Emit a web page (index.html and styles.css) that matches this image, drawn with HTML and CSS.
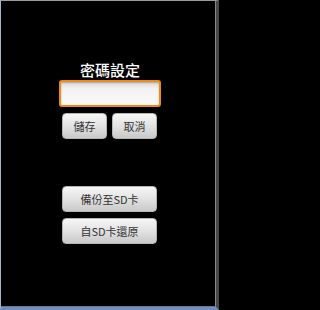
FILE: index.html
```html
<!DOCTYPE html>
<html>
<head>
<meta charset="utf-8">
<link rel="stylesheet" href="styles.css">
</head>
<body>
<div class="frame">
  <div class="screen">
    <div class="panel">
      <div class="title">密碼設定</div>
      <div class="input"></div>
      <div class="row">
        <div class="btn small">儲存</div>
        <div class="btn small">取消</div>
      </div>
      <div class="btn wide first">備份至SD卡</div>
      <div class="btn wide">自SD卡還原</div>
    </div>
  </div>
</div>
</body>
</html>
```
FILE: styles.css
```css
html, body {
  margin: 0;
  padding: 0;
  background: #000;
}
.frame {
  width: 219px;
  height: 310px;
  box-sizing: border-box;
  border-top: 1px solid #9c9c9c;
  border-left: 1px solid #a9b6cc;
  border-right: 3px solid #4a4a4a;
  border-bottom: 3px solid #6d90c8;
  background: #000;
}
.screen {
  height: 100%;
  box-sizing: border-box;
  border-bottom: 1px solid #777;
  border-right: 1px solid #888;
}
.panel {
  margin-left: 58px;
  width: 102px;
  padding-top: 59px;
  display: flex;
  flex-direction: column;
  font-family: "Noto Sans CJK TC", "Noto Sans CJK SC", sans-serif;
}
.title {
  color: #fff;
  font-size: 15px;
  font-weight: 500;
  line-height: 20px;
  text-align: center;
  height: 20px;
}
.input {
  height: 23px;
  border: 2px solid #f08a12;
  border-radius: 3px;
  background: linear-gradient(#dcdcdc, #f2f2f2 30%, #fafafa);
  box-shadow: inset 0 1px 2px rgba(0,0,0,0.25);
}
.row {
  display: flex;
  gap: 5px;
  margin: 6px 4px 0 3px;
}
.btn {
  height: 26px;
  box-sizing: border-box;
  border-radius: 4px;
  background: linear-gradient(#f6f6f6, #e2e2e2 50%, #c9c9c9);
  border: 1px solid #b5b5b5;
  color: #333;
  font-size: 11px;
  line-height: 24px;
  text-align: center;
}
.small {
  width: 45px;
}
.wide {
  margin: 6px 4px 0 3px;
}
.wide.first {
  margin-top: 47px;
}
```
